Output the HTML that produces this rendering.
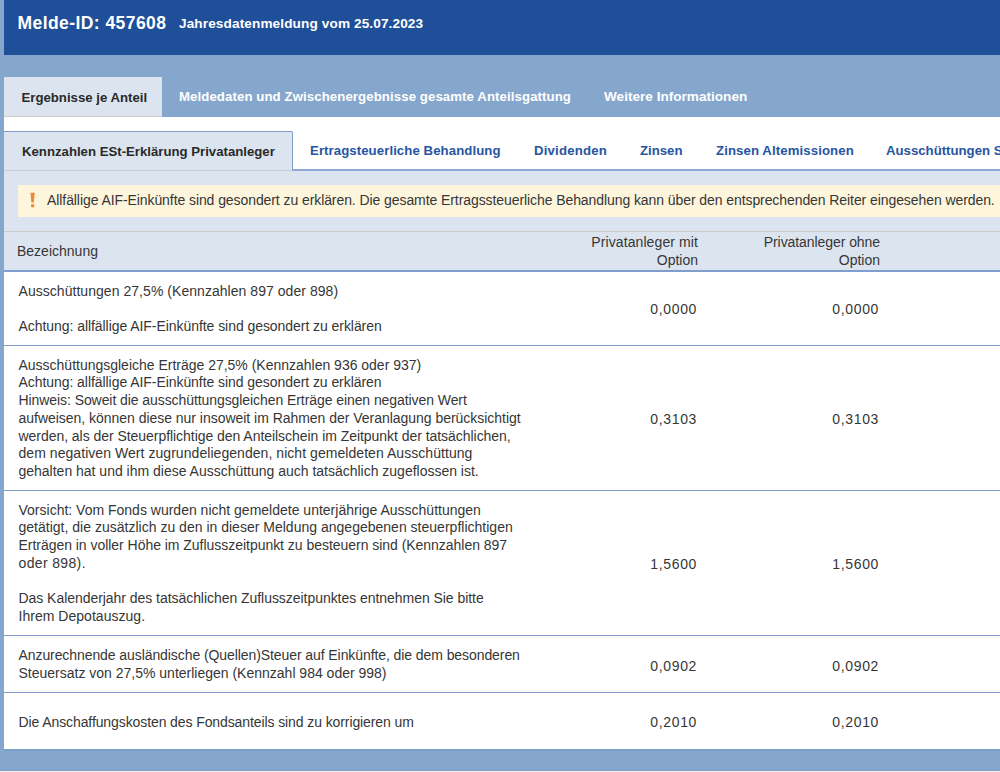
<!DOCTYPE html>
<html><head><meta charset="utf-8">
<style>
*{margin:0;padding:0;box-sizing:border-box}
html,body{width:1000px;height:772px;overflow:hidden;background:#86a7cd;font-family:"Liberation Sans",sans-serif;}
.a{position:absolute;white-space:nowrap}
#hdr{position:absolute;left:4px;top:0;width:996px;height:55px;background:#1f4f99}
#tab1{position:absolute;left:4px;top:77px;width:158px;height:40px;background:#dce5ef;border-bottom:1px solid #cdcbcb}
#panel{position:absolute;left:4px;top:117px;width:996px;height:632px;background:#fff}
#subbg{position:absolute;left:4px;top:171px;width:996px;height:100px;background:#dce5ef}
#subline{position:absolute;left:4px;top:169px;width:996px;height:2px;background:#8eaad2}
#tab2{position:absolute;left:4px;top:131px;width:289px;height:40px;background:#dce5ef;border:1px solid #7f9ecb;border-left:none;border-bottom:1px solid #cdcbcb;border-top-right-radius:2px}
#warn{position:absolute;left:18px;top:185px;width:982px;height:32px;background:#fdf5dc}
#thtop{position:absolute;left:4px;top:231px;width:996px;height:1px;background:#cdcbcb}
.hl{position:absolute;left:4px;width:996px;height:1.5px;background:#7f9ecb}
.t{font-size:14px;color:#363636;line-height:17.7px}
.rl{position:absolute;left:4px;width:996px;height:1px;background:#7f9ecb}
.v{text-align:right;letter-spacing:0.64px}
#bline{position:absolute;left:0;top:769px;width:1000px;height:1px;background:#7c9fca}
#bgrey{position:absolute;left:0;top:771px;width:1000px;height:1px;background:#eeedea}
.tb{font-weight:bold;font-size:13.2px}
</style></head><body>
<div id="hdr"></div>
<div class="a" style="left:17.5px;top:13px;font-size:17.5px;font-weight:bold;color:#fff;line-height:20px;letter-spacing:0.43px">Melde-ID: 457608</div>
<div class="a" style="left:179px;top:15.5px;font-size:13.6px;font-weight:bold;color:#fff;line-height:16px;letter-spacing:0.12px">Jahresdatenmeldung vom 25.07.2023</div>

<div id="tab1"></div>
<div class="a tb" style="left:21.5px;top:89.5px;color:#2a2a2a;line-height:16px">Ergebnisse je Anteil</div>
<div class="a tb" style="left:179px;top:89px;color:#fff;line-height:16px;letter-spacing:0.1px">Meldedaten und Zwischenergebnisse gesamte Anteilsgattung</div>
<div class="a tb" style="left:604px;top:89px;color:#fff;line-height:16px;font-size:13.6px">Weitere Informationen</div>

<div id="panel"></div>
<div id="subbg"></div>
<div id="subline"></div>
<div id="tab2"></div>
<div class="a tb" style="left:22px;top:143.5px;color:#2a2a2a;line-height:16px">Kennzahlen ESt-Erklärung Privatanleger</div>
<div class="a tb" style="left:310px;top:142.5px;color:#2855a2;line-height:16px;letter-spacing:0.08px">Ertragsteuerliche Behandlung</div>
<div class="a tb" style="left:534px;top:142.5px;color:#2855a2;line-height:16px;letter-spacing:0.2px">Dividenden</div>
<div class="a tb" style="left:640px;top:142.5px;color:#2855a2;line-height:16px">Zinsen</div>
<div class="a tb" style="left:716px;top:142.5px;color:#2855a2;line-height:16px;letter-spacing:0.1px">Zinsen Altemissionen</div>
<div class="a tb" style="left:886px;top:142.5px;color:#2855a2;line-height:16px">Ausschüttungen Sonstige</div>

<div id="warn"></div>
<svg style="position:absolute;left:30px;top:192px" width="6" height="17" viewBox="0 0 6 17"><path d="M0.5 0.8 L4.7 0.8 L3.8 10.4 L1.4 10.4 Z" fill="#e98a34"/><circle cx="2.6" cy="13.8" r="1.8" fill="#e98a34"/></svg>
<div class="a t" style="left:47px;top:192.2px;letter-spacing:-0.08px">Allfällige AIF-Einkünfte sind gesondert zu erklären. Die gesamte Ertragssteuerliche Behandlung kann über den entsprechenden Reiter eingesehen werden.</div>

<div id="thtop"></div>
<div class="a t" style="left:17px;top:243px">Bezeichnung</div>
<div class="a t" style="left:560px;top:234px;width:138px;text-align:right"><span style="letter-spacing:0.1px">Privatanleger mit</span><br>Option</div>
<div class="a t" style="left:740px;top:234px;width:140px;text-align:right"><span style="letter-spacing:-0.07px">Privatanleger ohne</span><br>Option</div>
<div class="hl" style="top:270px"></div>
<div class="a t" style="left:18.5px;top:282.5px"><span style="letter-spacing:0.044px">Ausschüttungen 27,5% (Kennzahlen 897 oder 898)</span><br><br><span style="letter-spacing:-0.056px">Achtung: allfällige AIF-Einkünfte sind gesondert zu erklären</span></div>
<div class="a t" style="left:18.5px;top:356.7px"><span style="letter-spacing:-0.008px">Ausschüttungsgleiche Erträge 27,5% (Kennzahlen 936 oder 937)</span><br><span style="letter-spacing:-0.059px">Achtung: allfällige AIF-Einkünfte sind gesondert zu erklären</span><br><span style="letter-spacing:-0.074px">Hinweis: Soweit die ausschüttungsgleichen Erträge einen negativen Wert</span><br><span style="letter-spacing:-0.028px">aufweisen, können diese nur insoweit im Rahmen der Veranlagung berücksichtigt</span><br><span style="letter-spacing:-0.044px">werden, als der Steuerpflichtige den Anteilschein im Zeitpunkt der tatsächlichen,</span><br><span style="letter-spacing:0.053px">dem negativen Wert zugrundeliegenden, nicht gemeldeten Ausschüttung</span><br><span style="letter-spacing:-0.007px">gehalten hat und ihm diese Ausschüttung auch tatsächlich zugeflossen ist.</span></div>
<div class="a t" style="left:18.5px;top:501.7px"><span style="letter-spacing:0.001px">Vorsicht: Vom Fonds wurden nicht gemeldete unterjährige Ausschüttungen</span><br><span style="letter-spacing:0.010px">getätigt, die zusätzlich zu den in dieser Meldung angegebenen steuerpflichtigen</span><br><span style="letter-spacing:-0.033px">Erträgen in voller Höhe im Zuflusszeitpunkt zu besteuern sind (Kennzahlen 897</span><br><span style="letter-spacing:0.356px">oder 898).</span><br><br><span style="letter-spacing:-0.046px">Das Kalenderjahr des tatsächlichen Zuflusszeitpunktes entnehmen Sie bitte</span><br><span style="letter-spacing:0.029px">Ihrem Depotauszug.</span></div>
<div class="a t" style="left:18.5px;top:647.1px"><span style="letter-spacing:-0.081px">Anzurechnende ausländische (Quellen)Steuer auf Einkünfte, die dem besonderen</span><br><span style="letter-spacing:-0.002px">Steuersatz von 27,5% unterliegen (Kennzahl 984 oder 998)</span></div>
<div class="a t" style="left:18.5px;top:713.5px"><span style="letter-spacing:-0.097px">Die Anschaffungskosten des Fondsanteils sind zu korrigieren um</span></div>
<div class="rl" style="top:345.0px"></div>
<div class="rl" style="top:490.1px"></div>
<div class="rl" style="top:635.4px"></div>
<div class="rl" style="top:692.2px"></div>
<div class="a t v" style="left:600px;top:300.5px;width:97px">0,0000</div>
<div class="a t v" style="left:780px;top:300.5px;width:99px">0,0000</div>
<div class="a t v" style="left:600px;top:410.9px;width:97px">0,3103</div>
<div class="a t v" style="left:780px;top:410.9px;width:99px">0,3103</div>
<div class="a t v" style="left:600px;top:555.9px;width:97px">1,5600</div>
<div class="a t v" style="left:780px;top:555.9px;width:99px">1,5600</div>
<div class="a t v" style="left:600px;top:657.8px;width:97px">0,0902</div>
<div class="a t v" style="left:780px;top:657.8px;width:99px">0,0902</div>
<div class="a t v" style="left:600px;top:714.2px;width:97px">0,2010</div>
<div class="a t v" style="left:780px;top:714.2px;width:99px">0,2010</div>
<div id="bline"></div><div style="position:absolute;left:4px;top:749px;width:996px;height:2px;background:#7e9fca"></div><div id="bgrey"></div>

</body></html>
